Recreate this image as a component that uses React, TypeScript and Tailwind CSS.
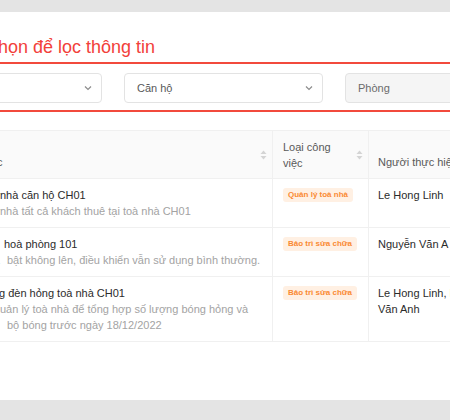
import { ReactNode } from 'react'

// Text whose beginning runs off the left edge of the page.
// The prefix sits in a zero-width box and spills out to the left.
function Clipped({ prefix, shift, children }: { prefix: string; shift: string; children: ReactNode }) {
  return (
    <div className="flex whitespace-nowrap">
      <span className="flex w-0 shrink-0 justify-end">{prefix}</span>
      <span className={shift}>{children}</span>
    </div>
  )
}

function SortIcon() {
  return (
    <svg width="7" height="10" viewBox="0 0 7 10" className="shrink-0">
      <path d="M3.5 0.5 L6.5 4 L0.5 4 Z" fill="#d4d4d4" />
      <path d="M3.5 9.5 L6.5 6 L0.5 6 Z" fill="#d4d4d4" />
    </svg>
  )
}

function Chevron() {
  return (
    <svg width="8" height="6" viewBox="0 0 8 6" fill="none" className="shrink-0">
      <path d="M1 1.5 L4 4.5 L7 1.5" stroke="#8c8c8c" strokeWidth="1.2" />
    </svg>
  )
}

const tasks = [
  {
    id: 1,
    lines: [
      { prefix: 'Thu phí quản lý', shift: 'ml-0', text: 'nhà căn hộ CH01' },
      { prefix: 'Thu phí quản lý', shift: 'ml-0', text: 'nhà tất cả khách thuê tại toà nhà CH01' },
    ],
    tag: 'Quản lý toà nhà',
    people: 'Le Hong Linh',
  },
  {
    id: 2,
    lines: [
      { prefix: 'Sửa điều', shift: 'ml-[4px]', text: 'hoà phòng 101' },
      { prefix: 'Điều hoà', shift: 'ml-[7px]', text: 'bật không lên, điều khiển vẫn sử dụng bình thường.' },
    ],
    tag: 'Bảo trì sửa chữa',
    people: 'Nguyễn Văn A',
  },
  {
    id: 3,
    lines: [
      { prefix: 'Kiểm tra bón', shift: '-ml-[1px]', text: 'g đèn hỏng toà nhà CH01' },
      { prefix: 'Liên hệ q', shift: 'ml-0', text: 'uản lý toà nhà để tổng hợp số lượng bóng hỏng và' },
      { prefix: 'thay toàn', shift: 'ml-[7px]', text: 'bộ bóng trước ngày 18/12/2022' },
    ],
    tag: 'Bảo trì sửa chữa',
    people: 'Le Hong Linh, Nguyễn Văn Anh',
  },
]

export default function App() {
  return (
    <div className="h-[420px] w-[450px] overflow-hidden bg-[#e4e4e4] pt-[12px] font-['Liberation_Sans',Arial,sans-serif]">
      <div className="-ml-[121px] h-[388px] w-[760px] bg-white px-3 pt-[23px]">
        {/* Heading */}
        <h2 className="h-[24px] pl-[108px] text-[18px] leading-[24px] text-[#f2403a]">
          <Clipped prefix="Lựa c" shift="-ml-[1px]">họn để lọc thông tin</Clipped>
        </h2>

        {/* Filters */}
        <div className="mt-[3px] flex gap-[22px] border-2 border-[#f24a3c] pt-[9px] pr-[10px] pb-[7px] pl-[10px]">
          <div className="flex h-[30px] w-[199px] items-center justify-end rounded-[4px] border border-[#e3e3e3] bg-white pr-[9px]">
            <Chevron />
          </div>
          <div className="flex h-[30px] w-[199px] items-center justify-between rounded-[4px] border border-[#e3e3e3] bg-white pr-[9px] pl-[12px] text-[11px] text-[#595959]">
            <span>Căn hộ</span>
            <Chevron />
          </div>
          <div className="flex h-[30px] w-[199px] items-center rounded-[4px] border border-[#e3e3e3] bg-[#f5f5f5] pl-[12px] text-[11px] text-[#6b6b6b]">
            <span>Phòng</span>
          </div>
        </div>

        {/* Task table */}
        <div className="mt-[18px] grid grid-cols-[382px_96px_200px] border-t border-[#f0f0f0] text-[11px] leading-4">
          <div className="flex h-[48px] items-center border-r border-b border-[#f0f0f0] bg-[#fafafa] pr-[5px] pl-[109px] text-[#595959]">
            <div className="flex-1 self-end pb-2">
              <Clipped prefix="Công việ" shift="-ml-[3px]">c</Clipped>
            </div>
            <SortIcon />
          </div>
          <div className="flex h-[48px] items-center border-r border-b border-[#f0f0f0] bg-[#fafafa] pr-[5px] pl-[10px] text-[#595959]">
            <div className="flex-1">
              Loại công
              <br />
              việc
            </div>
            <SortIcon />
          </div>
          <div className="flex h-[48px] border-b border-[#f0f0f0] bg-[#fafafa] pl-[9px] text-[#595959]">
            <div className="self-end pb-2 whitespace-nowrap">Người thực hiện</div>
          </div>

          {tasks.map((t) => (
            <div key={t.id} className="contents">
              <div className="border-r border-b border-[#f0f0f0] py-2 pl-[109px]">
                {t.lines.map((l, i) => (
                  <div key={i} className={i === 0 ? 'text-[#2b2b2b]' : 'text-[#a3a3a3]'}>
                    <Clipped prefix={l.prefix} shift={l.shift}>
                      {l.text}
                    </Clipped>
                  </div>
                ))}
              </div>
              <div className="border-r border-b border-[#f0f0f0] px-[10px] py-2">
                <div className="flex h-4 items-center">
                  <span className="inline-flex h-[14px] items-center rounded-[3px] bg-[#fff0e3] px-[5px] text-[8px] font-bold whitespace-nowrap text-[#fa8a33]">
                    {t.tag}
                  </span>
                </div>
              </div>
              <div className="border-b border-[#f0f0f0] py-2 pl-[9px] text-[#2b2b2b]">
                <div className="w-[120px]">{t.people}</div>
              </div>
            </div>
          ))}
        </div>
      </div>
    </div>
  )
}
